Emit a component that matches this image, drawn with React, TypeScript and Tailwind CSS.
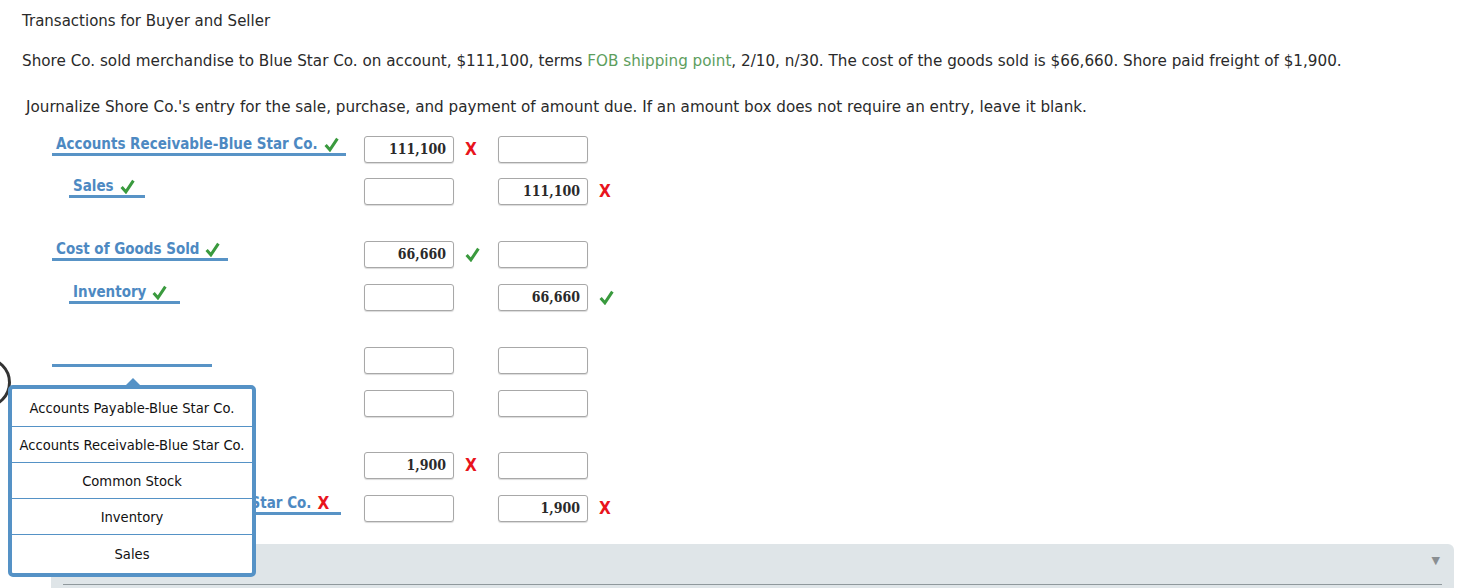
import React from "react";

const labelFont = { fontFamily: '"DejaVu Sans Condensed", "DejaVu Sans", sans-serif' };

function Check() {
  return (
    <svg width="15" height="15" viewBox="0 0 14 14" className="inline-block">
      <path d="M1.5 7.5 L5.5 12 L12.5 1.5" fill="none" stroke="#3a9a3e" strokeWidth="2.8" strokeLinejoin="miter" />
    </svg>
  );
}

function Cross() {
  return (
    <span className="text-[#e8141c] font-bold text-[17px] leading-none" style={{ fontFamily: '"DejaVu Sans Condensed", "DejaVu Sans", sans-serif' }}>
      X
    </span>
  );
}

type Mark = "x" | "c" | null;

function Box({ v }: { v?: string }) {
  return (
    <div
      className="w-[90px] h-[27px] border border-[#a8a8a8] rounded-[3px] bg-white shadow-[0_1px_1px_rgba(0,0,0,0.15)] flex items-center justify-end pr-[7px] text-[14px] font-bold text-[#2a2a2a]"
      style={{ fontFamily: '"DejaVu Serif Condensed", "DejaVu Serif", serif' }}
    >
      {v}
    </div>
  );
}

function MarkCell({ m }: { m: Mark }) {
  return (
    <div className="w-[44px] h-[27px] flex items-center pl-[11px]">
      {m === "x" ? <Cross /> : m === "c" ? <Check /> : null}
    </div>
  );
}

function Row({
  label,
  indent,
  uw,
  lm,
  d,
  dm,
  c,
  cm,
}: {
  label: string;
  indent: boolean;
  uw: number;
  lm: Mark;
  d?: string;
  dm: Mark;
  c?: string;
  cm: Mark;
}) {
  return (
    <div className="flex items-start h-[27px]">
      <div className="w-[312px] flex">
        <div
          className={`${indent ? "ml-[17px]" : ""} h-[21px] mt-[-1px] border-b-[3px] border-[#5893c6] pl-[4px] flex items-center gap-[6px] text-[15px] font-bold text-[#4d89c2] whitespace-nowrap`}
          style={{ width: uw, ...labelFont }}
        >
          <span className="leading-[17px]">{label}</span>
          {lm === "c" ? <Check /> : lm === "x" ? <Cross /> : null}
        </div>
      </div>
      <Box v={d} />
      <MarkCell m={dm} />
      <Box v={c} />
      <MarkCell m={cm} />
    </div>
  );
}

const items = [
  { t: "Accounts Payable-Blue Star Co.", h: "h-[37px]" },
  { t: "Accounts Receivable-Blue Star Co.", h: "h-[36px]" },
  { t: "Common Stock", h: "h-[36px]" },
  { t: "Inventory", h: "h-[36px]" },
  { t: "Sales", h: "h-[39px]" },
];

export default function App() {
  return (
    <div
      className="relative w-[1457px] h-[588px] overflow-hidden bg-white text-[#2a2a2a]"
      style={{ fontFamily: '"DejaVu Sans", Verdana, sans-serif' }}
    >
      <div className="pl-[22px] pt-[11px] text-[15.2px]">
        <div className="leading-[20px] text-[15px]">Transactions for Buyer and Seller</div>
        <div className="leading-[20px] mt-[20px]">
          Shore Co. sold merchandise to Blue Star Co. on account, $111,100, terms{" "}
          <span className="text-[#5d9e5d]">FOB shipping point</span>, 2/10, n/30. The cost of the goods sold is $66,660.
          Shore paid freight of $1,900.
        </div>
        <div className="leading-[20px] mt-[26px] pl-[4px]">
          Journalize Shore Co.'s entry for the sale, purchase, and payment of amount due. If an amount box does not require an entry, leave it blank.
        </div>
      </div>

      <div className="pl-[52px] mt-[19px] flex flex-col">
        <Row label="Accounts Receivable-Blue Star Co." indent={false} uw={294} lm="c" d="111,100" dm="x" cm={null} />
        <div className="mt-[15px]">
          <Row label="Sales" indent uw={76} lm="c" dm={null} c="111,100" cm="x" />
        </div>
        <div className="mt-[36px]">
          <Row label="Cost of Goods Sold" indent={false} uw={176} lm="c" d="66,660" dm="c" cm={null} />
        </div>
        <div className="mt-[16px]">
          <Row label="Inventory" indent uw={111} lm="c" dm={null} c="66,660" cm="c" />
        </div>
        <div className="mt-[36px]">
          <Row label="" indent={false} uw={160} lm={null} dm={null} cm={null} />
        </div>
        <div className="mt-[16px]">
          <Row label="" indent uw={120} lm={null} dm={null} cm={null} />
        </div>
        <div className="mt-[35px]">
          <Row label="" indent={false} uw={140} lm={null} d="1,900" dm="x" cm={null} />
        </div>
        <div className="mt-[16px]">
          <Row label="Accounts Payable-Blue Star Co." indent uw={272} lm="x" dm={null} c="1,900" cm="x" />
        </div>
      </div>

      {/* gray panel */}
      <div className="absolute left-[51px] top-[544px] w-[1403px] h-[60px] bg-[#dfe5e8] rounded-tr-[6px]">
        <div className="absolute right-[14px] top-[9px] text-[#8a8f92] text-[11px]">▼</div>
        <div className="absolute left-[12px] right-[12px] top-[40px] h-[1px] bg-[#8f989c]" />
      </div>

      {/* circle */}
      <div className="absolute left-[-40px] top-[357px] w-[51px] h-[51px] rounded-full border-[3px] border-[#333]" />

      {/* dropdown */}
      <div className="absolute left-[125px] top-[378px] w-0 h-0 border-l-[8px] border-r-[8px] border-b-[8px] border-l-transparent border-r-transparent border-b-[#5592c6]" />
      <div
        className="absolute left-[8px] top-[385px] w-[248px] bg-white border-[4px] border-[#5592c6] rounded-[5px] flex flex-col text-[14.6px] text-[#111]"
        style={{ fontFamily: '"DejaVu Sans Condensed", "DejaVu Sans", sans-serif' }}
      >
        {items.map((it, i) => (
          <div
            key={it.t}
            className={`${it.h} flex items-center justify-center whitespace-nowrap ${i > 0 ? "border-t border-[#5592c6]" : ""}`}
          >
            {it.t}
          </div>
        ))}
      </div>
    </div>
  );
}
